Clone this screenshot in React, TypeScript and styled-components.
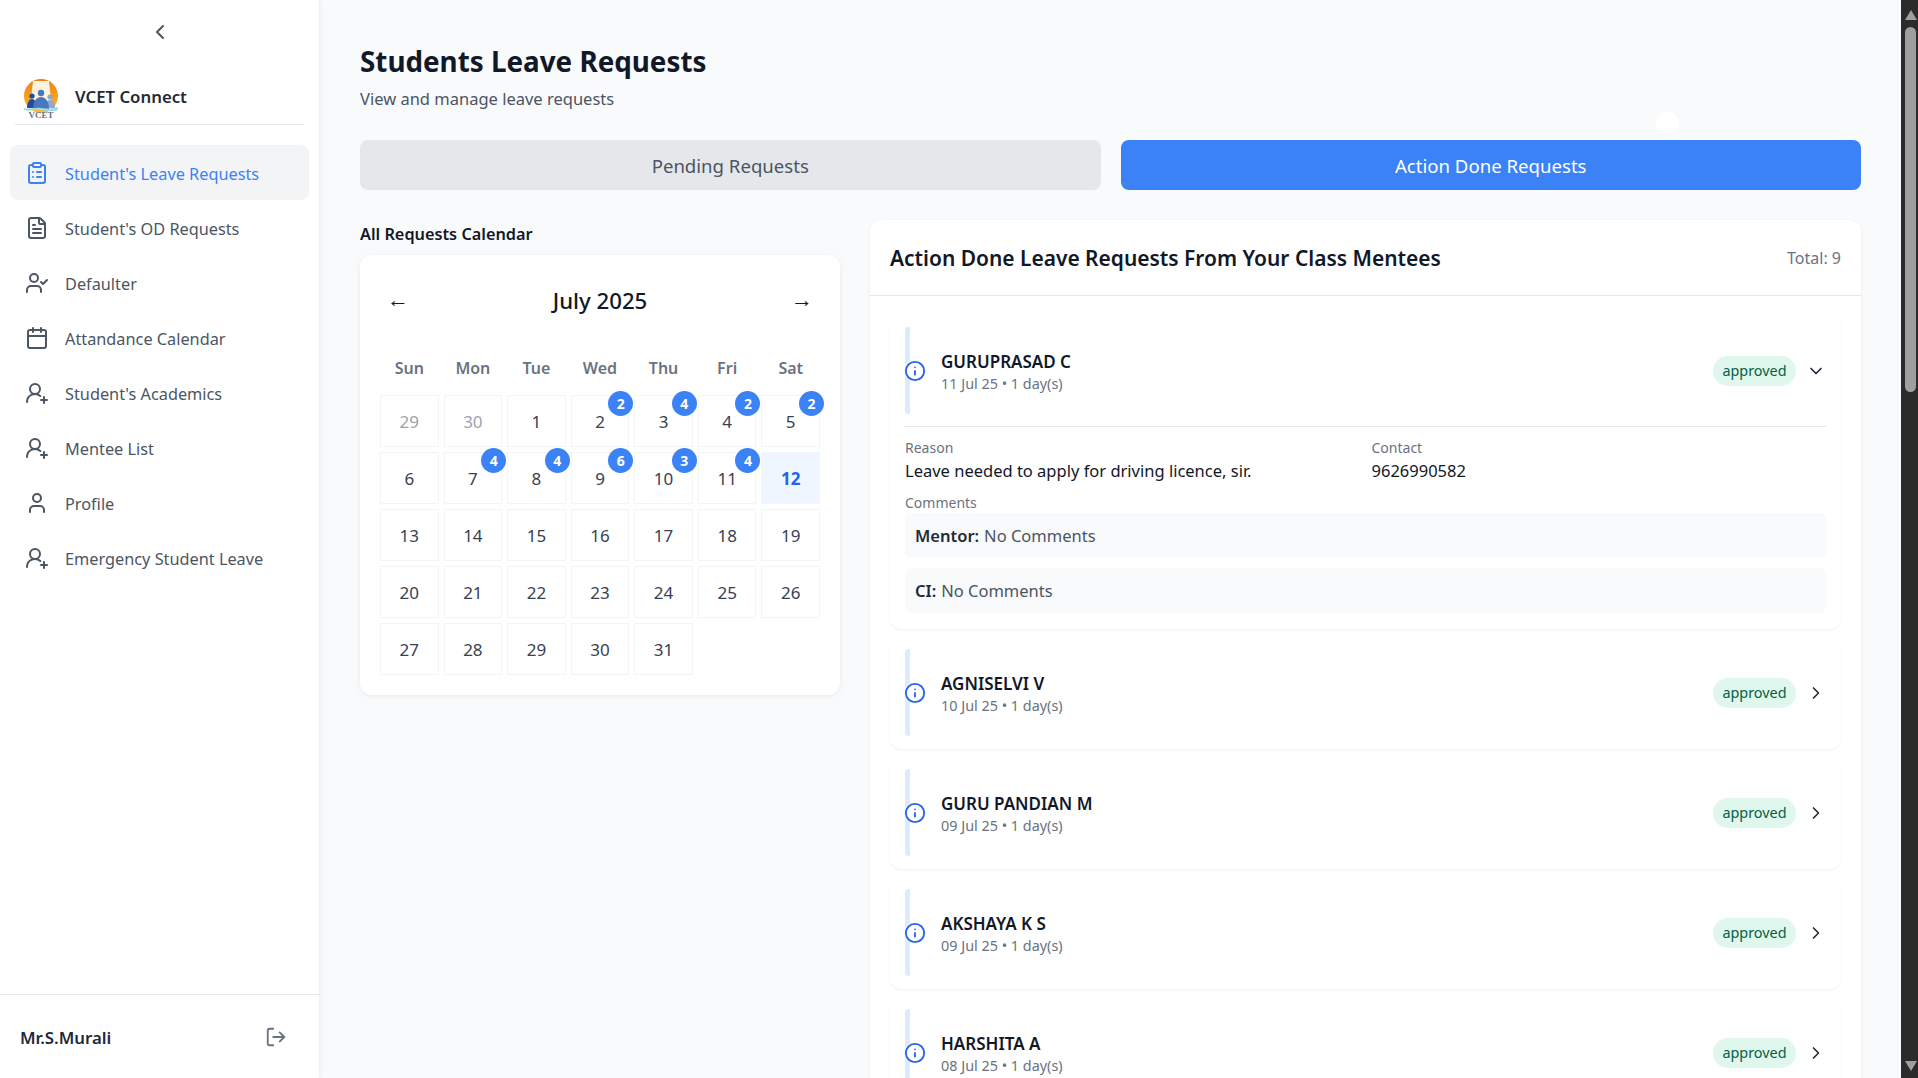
import React, { FC } from 'react'
import styled, { createGlobalStyle } from 'styled-components'
import {
  Calendar,
  ChevronDown,
  ChevronLeft,
  ChevronRight,
  ClipboardList,
  FileText,
  Info,
  LogOut,
  User,
  UserCheck,
  UserRoundPlus
} from 'lucide-react'

const GlobalStyle = createGlobalStyle`
  html, body { margin: 0; height: 100%; overflow: hidden; }
  body { font-family: "Noto Sans", "Open Sans", Arial, sans-serif; color: #111827; }
  * { box-sizing: border-box; }
`

const Shell = styled.div`
  display: flex;
  height: 100vh;
  background: #f9fafb;
`
const Sidebar = styled.aside`
  width: 319px;
  flex-shrink: 0;
  display: flex;
  flex-direction: column;
  background: #fff;
  box-shadow: 0 0 5px rgba(0, 0, 0, 0.1);
  z-index: 1;
`
const Collapse = styled.div`
  height: 64px;
  display: flex;
  align-items: center;
  justify-content: center;
  color: #4b5563;
`
const Brand = styled.div`
  margin: 14px 15px 0;
  height: 47px;
  padding: 0 8px 10px;
  display: flex;
  align-items: center;
  gap: 16px;
  border-bottom: 1px solid #e5e7eb;
  font-size: 16.8px;
  font-weight: 600;
  color: #1f2937;
  svg { margin-top: 6px; }
`
const Nav = styled.nav`
  flex: 1;
  padding: 20px 10px 0;
`
const NavItem = styled.div<{ $active?: boolean }>`
  height: 55px;
  width: 299px;
  padding: 2px 0 0 15px;
  display: flex;
  align-items: center;
  gap: 16px;
  border-radius: 8px;
  font-size: 16.3px;
  color: ${props => (props.$active ? '#3b82f6' : '#4b5563')};
  background: ${props => (props.$active ? '#f3f4f6' : 'transparent')};
  svg { flex-shrink: 0; margin-top: -2px; }
`
const UserBar = styled.div`
  height: 84px;
  padding: 1px 32px 0 20px;
  display: flex;
  align-items: center;
  justify-content: space-between;
  border-top: 1px solid #e5e7eb;
  font-size: 16.8px;
  font-weight: 600;
  color: #1f2937;
  svg { color: #6b7280; }
`
const Main = styled.main`
  flex: 1;
  min-width: 0;
  height: 100vh;
  overflow-y: auto;
  scrollbar-width: none;
`
const ScrollRail = styled.div`
  width: 17px;
  flex-shrink: 0;
  height: 100vh;
  display: flex;
  flex-direction: column;
  align-items: center;
  padding: 10px 0 7px 2px;
  background: #2b2b2b;
`
const RailArrow = styled.span<{ $down?: boolean }>`
  width: 0;
  height: 0;
  border-left: 6.5px solid transparent;
  border-right: 6.5px solid transparent;
  border-${props => (props.$down ? 'top' : 'bottom')}: 10px solid #9f9f9f;
`
const RailThumb = styled.div`
  width: 11px;
  height: 365px;
  margin: 7px 0 auto;
  border-radius: 6px;
  background: #9f9f9f;
`
const Content = styled.div`
  padding: 41px 40px 40px 41px;
`
const Title = styled.h1`
  margin: 0;
  font-size: 27.8px;
  line-height: 41px;
  font-weight: 700;
  color: #111827;
`
const Subtitle = styled.p`
  margin: 5px 0 29px;
  font-size: 16.5px;
  line-height: 24px;
  color: #4b5563;
`
const Tabs = styled.div`
  position: relative;
  display: grid;
  grid-template-columns: 1fr 1fr;
  gap: 20px;
  margin-bottom: 30px;
`
const Tab = styled.button<{ $active?: boolean }>`
  height: 50px;
  border: 0;
  border-radius: 8px;
  font: inherit;
  font-size: 18.6px;
  color: ${props => (props.$active ? '#fff' : '#4b5563')};
  background: ${props => (props.$active ? '#3b82f6' : '#e5e7eb')};
`
const RippleDot = styled.span`
  position: absolute;
  right: 182px;
  top: -28px;
  width: 23px;
  height: 22px;
  border-radius: 50%;
  background: #fff;
`
const Columns = styled.div`
  display: grid;
  grid-template-columns: 480px 1fr;
  gap: 30px;
  align-items: start;
`
const CalendarTitle = styled.h3`
  margin: 2px 0 8px;
  font-size: 16.3px;
  line-height: 25px;
  font-weight: 600;
  color: #111827;
`
const CalendarCard = styled.div`
  padding: 20px;
  border-radius: 12px;
  background: #fff;
  box-shadow: 0 1px 4px rgba(0, 0, 0, 0.08);
`
const MonthBar = styled.div`
  height: 50px;
  margin-bottom: 31px;
  padding: 0 7px;
  display: flex;
  align-items: center;
  justify-content: space-between;
  font-size: 22px;
  color: #111827;
`
const MonthName = styled.span`
  font-size: 22.2px;
  font-weight: 500;
`
const MonthArrow = styled.span`
  margin-top: -4px;
`
const Weekdays = styled.div`
  display: grid;
  grid-template-columns: repeat(7, 1fr);
  gap: 5px;
  margin-bottom: 15px;
  text-align: center;
  font-size: 16px;
  line-height: 24px;
  font-weight: 600;
  color: #6b7280;
`
const DayGrid = styled.div`
  display: grid;
  grid-template-columns: repeat(7, 1fr);
  grid-auto-rows: 52px;
  gap: 5px;
`
const Day = styled.div<{ $muted?: boolean; $today?: boolean }>`
  position: relative;
  display: flex;
  align-items: center;
  justify-content: center;
  font-size: 17px;
  font-weight: ${props => (props.$today ? 700 : 400)};
  color: ${props => (props.$today ? '#2563eb' : props.$muted ? '#9ca3af' : '#374151')};
  background: ${props => (props.$today ? '#eff6ff' : 'transparent')};
  border: 1px solid ${props => (props.$today ? '#eff6ff' : '#f3f4f6')};
`
const CountBadge = styled.span`
  position: absolute;
  top: -5px;
  right: -5px;
  width: 25px;
  height: 25px;
  border-radius: 50%;
  display: flex;
  align-items: center;
  justify-content: center;
  background: #3b82f6;
  color: #fff;
  font-size: 14px;
  font-weight: 700;
`
const RequestsCard = styled.section`
  border-radius: 12px;
  background: #fff;
  box-shadow: 0 1px 4px rgba(0, 0, 0, 0.05);
`
const RequestsHeader = styled.header`
  height: 76px;
  padding: 0 20px;
  display: flex;
  align-items: center;
  justify-content: space-between;
  border-bottom: 1px solid #e5e7eb;
`
const RequestsTitle = styled.h2`
  margin: 0;
  font-size: 20.95px;
  font-weight: 600;
  color: #111827;
`
const Total = styled.span`
  font-size: 16px;
  color: #6b7280;
`
const RequestList = styled.div`
  padding: 21px 20px 20px;
  display: flex;
  flex-direction: column;
  gap: 10px;
`
const Request = styled.article`
  padding: 10px 15px 13px;
  border-radius: 12px;
  background: #fff;
  box-shadow: 0 1px 3px rgba(0, 0, 0, 0.06);
`
const RequestHead = styled.div`
  position: relative;
  height: 87px;
  padding: 0 0 0 31px;
  display: flex;
  align-items: center;
  border-left: 5px solid #dbeafe;
  border-radius: 4px;
`
const InfoMark = styled.span`
  position: absolute;
  left: -6px;
  top: 50%;
  transform: translateY(-50%);
  display: flex;
  background: #fff;
  border-radius: 50%;
  color: #2563eb;
`
const Who = styled.div`
  flex: 1;
  padding-top: 3px;
`
const Name = styled.div`
  font-size: 17px;
  line-height: 24px;
  font-weight: 600;
  color: #111827;
`
const Meta = styled.div`
  font-size: 14.4px;
  line-height: 20px;
  color: #6b7280;
`
const StatusPill = styled.span`
  height: 30px;
  width: 83px;
  margin-right: 10px;
  display: flex;
  align-items: center;
  justify-content: center;
  border-radius: 15px;
  font-size: 14.4px;
  color: #065f46;
  background: #dff7ec;
`
const Details = styled.div`
  margin-top: 12px;
  padding-top: 10px;
  border-top: 1px solid #e5e7eb;
`
const DetailGrid = styled.div`
  display: grid;
  grid-template-columns: 1fr 1fr;
  gap: 12px;
`
const Label = styled.div`
  font-size: 14px;
  line-height: 21px;
  color: #6b7280;
`
const Value = styled.div`
  font-size: 16.5px;
  line-height: 25px;
  color: #111827;
`
const CommentsLabel = styled(Label)`
  margin-top: 9px;
`
const Comment = styled.div`
  height: 45px;
  margin-bottom: 10px;
  padding: 0 10px;
  display: flex;
  align-items: center;
  gap: 5px;
  border-radius: 6px;
  background: #f9fafb;
  font-size: 16.5px;
  color: #4b5563;
  &:last-child { margin-bottom: 3px; }
  b { font-weight: 600; color: #1f2937; }
`

const Logo: FC = () => (
  <svg width="36" height="40" viewBox="0 0 36 40">
    <defs>
      <linearGradient id="sun" x1="0" y1="0" x2="0" y2="1">
        <stop offset="0" stopColor="#f07c14" />
        <stop offset="1" stopColor="#fbc02d" />
      </linearGradient>
    </defs>
    <circle cx="18" cy="17" r="17" fill="url(#sun)" />
    <path d="M10 2h16l3 28H7z" fill="#fdf3df" />
    <circle cx="9" cy="17" r="2.6" fill="#1f4e9c" />
    <path d="M4 29c0-5 2-9 5-9s5 4 5 9z" fill="#1f4e9c" />
    <circle cx="27" cy="18" r="2.6" fill="#8fa8cf" />
    <path d="M22 29c0-5 2-8 5-8s5 3 5 8z" fill="#8fa8cf" />
    <circle cx="18" cy="14" r="3.2" fill="#4a78bf" />
    <path d="M10 30c0-7 3-12 8-12s8 5 8 12z" fill="#4a78bf" />
    <path d="M1 29c6 2 10-1 17 0s11 1 17-1v3c-6 2-11 1-17 0S7 33 1 31z" fill="#9fd8ea" />
    <text x="18" y="39" textAnchor="middle" fontFamily="Liberation Serif, serif" fontSize="9" fill="#6b7280">
      VCET
    </text>
  </svg>
)

const NAV_ITEMS = [
  { label: "Student's Leave Requests", icon: ClipboardList, active: true },
  { label: "Student's OD Requests", icon: FileText },
  { label: 'Defaulter', icon: UserCheck },
  { label: 'Attandance Calendar', icon: Calendar },
  { label: "Student's Academics", icon: UserRoundPlus },
  { label: 'Mentee List', icon: UserRoundPlus },
  { label: 'Profile', icon: User },
  { label: 'Emergency Student Leave', icon: UserRoundPlus }
]

const WEEKDAYS = ['Sun', 'Mon', 'Tue', 'Wed', 'Thu', 'Fri', 'Sat']
const COUNTS: Record<number, number> = { 2: 2, 3: 4, 4: 2, 5: 2, 7: 4, 8: 4, 9: 6, 10: 3, 11: 4 }
const DAYS = Array.from({ length: 31 }, (_, i) => i + 1)

const REQUESTS = [
  { name: 'AGNISELVI V', date: '10 Jul 25' },
  { name: 'GURU PANDIAN M', date: '09 Jul 25' },
  { name: 'AKSHAYA K S', date: '09 Jul 25' },
  { name: 'HARSHITA A', date: '08 Jul 25' }
]

const RequestHeader: FC<{ name: string; date: string; open?: boolean }> = ({ name, date, open }) => (
  <RequestHead>
    <InfoMark>
      <Info size={22} strokeWidth={2} />
    </InfoMark>
    <Who>
      <Name>{name}</Name>
      <Meta>{date} • 1 day(s)</Meta>
    </Who>
    <StatusPill>approved</StatusPill>
    {open ? <ChevronDown size={20} color="#1f2937" /> : <ChevronRight size={20} color="#1f2937" />}
  </RequestHead>
)

const App: FC = () => (
  <Shell>
    <GlobalStyle />
    <Sidebar>
      <Collapse>
        <ChevronLeft size={24} />
      </Collapse>
      <Brand>
        <Logo />
        VCET Connect
      </Brand>
      <Nav>
        {NAV_ITEMS.map(({ label, icon: Icon, active }) => (
          <NavItem key={label} $active={active}>
            <Icon size={24} strokeWidth={2} />
            {label}
          </NavItem>
        ))}
      </Nav>
      <UserBar>
        Mr.S.Murali
        <LogOut size={22} />
      </UserBar>
    </Sidebar>
    <Main>
      <Content>
        <Title>Students Leave Requests</Title>
        <Subtitle>View and manage leave requests</Subtitle>
        <Tabs>
          <Tab>Pending Requests</Tab>
          <Tab $active>Action Done Requests</Tab>
          <RippleDot />
        </Tabs>
        <Columns>
          <div>
            <CalendarTitle>All Requests Calendar</CalendarTitle>
            <CalendarCard>
              <MonthBar>
                <MonthArrow>←</MonthArrow>
                <MonthName>July 2025</MonthName>
                <MonthArrow>→</MonthArrow>
              </MonthBar>
              <Weekdays>
                {WEEKDAYS.map(day => (
                  <div key={day}>{day}</div>
                ))}
              </Weekdays>
              <DayGrid>
                <Day $muted>29</Day>
                <Day $muted>30</Day>
                {DAYS.map(day => (
                  <Day key={day} $today={day === 12}>
                    {day}
                    {COUNTS[day] && <CountBadge>{COUNTS[day]}</CountBadge>}
                  </Day>
                ))}
              </DayGrid>
            </CalendarCard>
          </div>
          <RequestsCard>
            <RequestsHeader>
              <RequestsTitle>Action Done Leave Requests From Your Class Mentees</RequestsTitle>
              <Total>Total: 9</Total>
            </RequestsHeader>
            <RequestList>
              <Request>
                <RequestHeader name="GURUPRASAD C" date="11 Jul 25" open />
                <Details>
                  <DetailGrid>
                    <div>
                      <Label>Reason</Label>
                      <Value>Leave needed to apply for driving licence, sir.</Value>
                    </div>
                    <div>
                      <Label>Contact</Label>
                      <Value>9626990582</Value>
                    </div>
                  </DetailGrid>
                  <CommentsLabel>Comments</CommentsLabel>
                  <Comment>
                    <b>Mentor:</b> No Comments
                  </Comment>
                  <Comment>
                    <b>CI:</b> No Comments
                  </Comment>
                </Details>
              </Request>
              {REQUESTS.map(request => (
                <Request key={request.name}>
                  <RequestHeader name={request.name} date={request.date} />
                </Request>
              ))}
            </RequestList>
          </RequestsCard>
        </Columns>
      </Content>
    </Main>
    <ScrollRail>
      <RailArrow />
      <RailThumb />
      <RailArrow $down />
    </ScrollRail>
  </Shell>
)

export default App
